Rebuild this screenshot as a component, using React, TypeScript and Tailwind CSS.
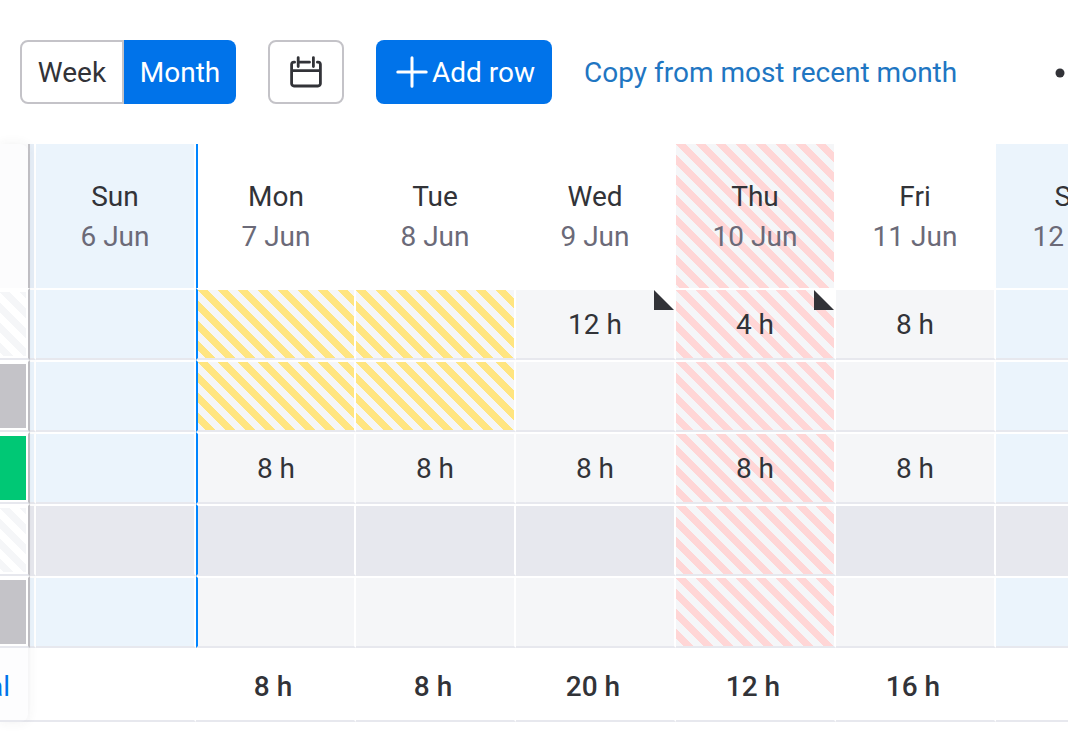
import clsx from 'clsx'

type Fill = 'plain' | 'weekend' | 'muted' | 'holiday' | 'leave'
type Label = 'hatched' | 'gray' | 'green'

interface Cell {
    hours?: string
    fill?: Fill
    note?: boolean
}

interface Row {
    id: string
    label: Label
    fill?: Fill
    cells: Cell[]
}

const days = [
    { name: 'Sun', date: '6 Jun', fill: 'weekend' },
    { name: 'Mon', date: '7 Jun', today: true },
    { name: 'Tue', date: '8 Jun' },
    { name: 'Wed', date: '9 Jun' },
    { name: 'Thu', date: '10 Jun', fill: 'holiday' },
    { name: 'Fri', date: '11 Jun' },
    { name: 'Sat', date: '12 Jun', fill: 'weekend' },
] as { name: string; date: string; fill?: Fill; today?: boolean }[]

const rows: Row[] = [
    {
        id: 'a',
        label: 'hatched',
        cells: [
            {},
            { fill: 'leave' },
            { fill: 'leave' },
            { hours: '12 h', note: true },
            { hours: '4 h', note: true },
            { hours: '8 h' },
            {},
        ],
    },
    { id: 'b', label: 'gray', cells: [{}, { fill: 'leave' }, { fill: 'leave' }, {}, {}, {}, {}] },
    {
        id: 'c',
        label: 'green',
        cells: [{}, { hours: '8 h' }, { hours: '8 h' }, { hours: '8 h' }, { hours: '8 h' }, { hours: '8 h' }, {}],
    },
    { id: 'd', label: 'hatched', fill: 'muted', cells: [{}, {}, {}, {}, {}, {}, {}] },
    { id: 'e', label: 'gray', cells: [{}, {}, {}, {}, {}, {}, {}] },
]

const totals = ['', '8 h', '8 h', '20 h', '12 h', '16 h', '']

const fills: Record<Fill, string> = {
    plain: 'bg-[#f5f6f8]',
    weekend: 'bg-[#ebf4fc]',
    muted: 'bg-[#e7e8ee]',
    holiday:
        'bg-[linear-gradient(45deg,#ffd6d6_25%,#f5f6f8_25%,#f5f6f8_50%,#ffd6d6_50%,#ffd6d6_75%,#f5f6f8_75%)] bg-[length:20px_20px]',
    leave: 'bg-[linear-gradient(45deg,#ffe580_25%,#f5f6f8_25%,#f5f6f8_50%,#ffe580_50%,#ffe580_75%,#f5f6f8_75%)] bg-[length:20px_20px]',
}

const labels: Record<Label, string> = {
    hatched:
        'bg-[linear-gradient(45deg,#f5f6f8_25%,#fff_25%,#fff_50%,#f5f6f8_50%,#f5f6f8_75%,#fff_75%)] bg-[length:20px_20px]',
    gray: 'bg-[#c4c3c8]',
    green: 'bg-[#00c875]',
}

function getFill(row: Row, index: number): Fill {
    const dayFill = days[index].fill

    if (dayFill === 'holiday') return 'holiday'

    return row.cells[index].fill ?? row.fill ?? dayFill ?? 'plain'
}

function CalendarIcon() {
    return (
        <svg
            className="size-8"
            viewBox="0 0 32 32"
            fill="none"
            stroke="#323338"
            strokeWidth="2.8"
            strokeLinecap="round"
            aria-hidden="true"
        >
            <path d="M4.6 6.2H4a2.4 2.4 0 0 0-2.4 2.4v19a2.4 2.4 0 0 0 2.4 2.4h24a2.4 2.4 0 0 0 2.4-2.4v-19A2.4 2.4 0 0 0 28 6.2h-.6M9 6.2h10.5M1.6 14.7h28.8M8.2 1.6v9M23.4 1.6v9" />
        </svg>
    )
}

function Toolbar() {
    return (
        <div className="flex items-center gap-8 px-5 py-10 overflow-hidden whitespace-nowrap">
            <div className="flex shrink-0">
                <button
                    type="button"
                    aria-pressed="false"
                    className="h-16 w-26 pt-0.5 rounded-l-lg border-2 border-[#c4c3c8] text-center"
                >
                    Week
                </button>

                <button
                    type="button"
                    aria-pressed="true"
                    className="h-16 w-28 pt-0.5 rounded-r-lg bg-[#0073ea] text-white"
                >
                    Month
                </button>
            </div>

            <button
                type="button"
                aria-label="Pick a date"
                className="flex items-center justify-center shrink-0 h-16 w-19 rounded-lg border-2 border-[#c4c3c8]"
            >
                <CalendarIcon />
            </button>

            <button
                type="button"
                className="flex items-center gap-1 shrink-0 h-16 w-44 pl-5 rounded-lg bg-[#0073ea] text-white"
            >
                <svg
                    className="size-8"
                    viewBox="0 0 32 32"
                    stroke="currentColor"
                    strokeWidth="3"
                    strokeLinecap="round"
                    aria-hidden="true"
                >
                    <path d="M16 1.8v28.4M1.8 16h28.4" />
                </svg>
                <span className="pt-0.5">Add row</span>
            </button>

            <a href="#copy" className="shrink-0 pt-0.5 text-[#1f76c2]">
                Copy from most recent month
            </a>

            <button type="button" aria-label="More options" className="shrink-0 ml-16">
                <svg className="h-10 w-12" viewBox="0 0 48 40" fill="#323338" aria-hidden="true">
                    <circle cx="7" cy="21" r="4.5" />
                    <circle cx="21" cy="21" r="4.5" />
                    <circle cx="35" cy="21" r="4.5" />
                </svg>
            </button>
        </div>
    )
}

function LabelCell({ label }: { label: Label }) {
    return (
        <th scope="row" className="p-0 border-t-2 border-t-white border-r-2 border-r-[#c4c3c8] border-b-2 border-b-[#e7e8ee]">
            <div className="py-0.5 pr-0.5">
                <div className={clsx('h-16', labels[label])} />
            </div>
        </th>
    )
}

function HoursCell({ cell, fill, today }: { cell: Cell; fill: Fill; today?: boolean }) {
    return (
        <td
            className={clsx(
                'relative p-0 pt-0.5 text-center border-t-2 border-t-white border-r-2 border-r-white border-b-2 border-b-[#e7e8ee]',
                today && 'border-l-2 border-l-[#0085ff]',
                fills[fill],
            )}
        >
            {cell.hours}

            {/* Note marker */}
            {cell.note && (
                <svg className="absolute top-0 right-0 size-5 bg-white" viewBox="0 0 20 20" aria-hidden="true">
                    <path d="M0 0v20h20z" fill="#323338" />
                </svg>
            )}
        </td>
    )
}

export default function App() {
    return (
        <main className="min-h-screen bg-white overflow-hidden font-[Roboto,sans-serif] text-[28px] leading-10 text-[#323338]">
            <Toolbar />

            <div className="relative">
                <table className="table-fixed w-full border-separate border-spacing-0">
                    <colgroup>
                        <col className="w-[30px]" />
                        <col className="w-1.5" />
                        {days.map((day) => (
                            <col key={day.name} className="w-40" />
                        ))}
                    </colgroup>

                    <thead>
                        <tr className="h-36">
                            <td className="p-0 bg-[#fcfcfd] border-r-2 border-[#c4c3c8]" />
                            <td className="p-0 bg-[#e6eef7] border-r-2 border-white" />

                            {days.map((day) => (
                                <th
                                    key={day.name}
                                    scope="col"
                                    className={clsx(
                                        'p-0 pt-0.5 font-normal border-r-2 border-r-white',
                                        day.today && 'border-l-2 border-l-[#0085ff]',
                                        day.fill && fills[day.fill],
                                    )}
                                >
                                    <div>{day.name}</div>
                                    <div className="text-[#6b6a78]">{day.date}</div>
                                </th>
                            ))}
                        </tr>
                    </thead>

                    <tbody>
                        {rows.map((row) => (
                            <tr key={row.id} className="h-18">
                                <LabelCell label={row.label} />
                                <HoursCell cell={{}} fill={row.fill ?? 'weekend'} />

                                {row.cells.map((cell, i) => (
                                    <HoursCell
                                        key={days[i].name}
                                        cell={cell}
                                        fill={getFill(row, i)}
                                        today={days[i].today}
                                    />
                                ))}
                            </tr>
                        ))}
                    </tbody>

                    <tfoot>
                        <tr className="h-[74px]">
                            <th scope="row" className="p-0 pt-1.5 font-normal bg-[#fdfdfe] border-b-2 border-[#e7e8ee]">
                                <a href="#total" className="flex justify-end pr-5 text-[#0073ea]">
                                    Total
                                </a>
                            </th>
                            <td className="p-0 border-b-2 border-[#e7e8ee]" />

                            {totals.map((total, i) => (
                                <td
                                    key={days[i].name}
                                    className="p-0 pt-1.5 pr-1 text-center font-medium border-r-2 border-r-white border-b-2 border-b-[#e7e8ee]"
                                >
                                    {total}
                                </td>
                            ))}
                        </tr>
                    </tfoot>
                </table>

                {/* Soft edge of the pinned column */}
                <div className="absolute inset-y-0 left-0 w-7 rounded-r-lg pointer-events-none shadow-[0_0_12px_rgba(50,51,56,0.07)]" />
            </div>
        </main>
    )
}
